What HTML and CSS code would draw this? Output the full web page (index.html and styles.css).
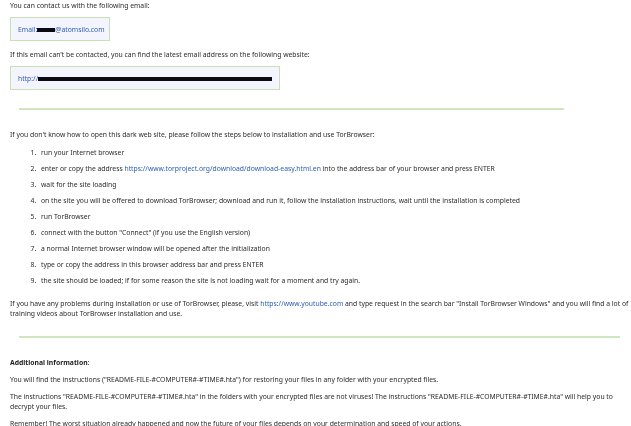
FILE: index.html
```html
<!DOCTYPE html>
<html lang="en">
<head>
<meta charset="utf-8">
<title>Contact</title>
<link rel="stylesheet" href="styles.css">
</head>
<body>
<main class="page">
  <p class="first">You can contact us with the following email:</p>
  <div class="box box-mail"><a class="nowrap">Email:<span class="redact redact-mail"></span>@atomsilo.com</a></div>
  <p class="after-box">If this email can't be contacted, you can find the latest email address on the following website:</p>
  <div class="box box-url"><a class="nowrap">http://<span class="redact redact-url"></span></a></div>
  <hr class="rule rule-one">
  <p class="intro">If you don't know how to open this dark web site, please follow the steps below to installation and use TorBrowser:</p>
  <ol class="steps">
    <li>run your Internet browser</li>
    <li>enter or copy the address <a>https://www.torproject.org/download/download-easy.html.en</a> into the address bar of your browser and press ENTER</li>
    <li>wait for the site loading</li>
    <li>on the site you will be offered to download TorBrowser; download and run it, follow the installation instructions, wait until the installation is completed</li>
    <li>run TorBrowser</li>
    <li>connect with the button "Connect" (if you use the English version)</li>
    <li>a normal Internet browser window will be opened after the initialization</li>
    <li>type or copy the address in this browser address bar and press ENTER</li>
    <li>the site should be loaded; if for some reason the site is not loading wait for a moment and try again.</li>
  </ol>
  <p class="help">If you have any problems during installation or use of TorBrowser, please, visit <a>https://www.youtube.com</a> and type request in the search bar "Install TorBrowser Windows" and you will find a lot of training videos about TorBrowser installation and use.</p>
  <hr class="rule rule-two">
  <p class="additional"><strong>Additional information</strong>:</p>
  <p class="para">You will find the instructions ("README-FILE-#COMPUTER#-#TIME#.hta") for restoring your files in any folder with your encrypted files.</p>
  <p class="para">The instructions "README-FILE-#COMPUTER#-#TIME#.hta" in the folders with your encrypted files are not viruses! The instructions "README-FILE-#COMPUTER#-#TIME#.hta" will help you to decrypt your files.</p>
  <p class="para">Remember! The worst situation already happened and now the future of your files depends on your determination and speed of your actions.</p>
</main>
</body>
</html>
```
FILE: styles.css
```css
html, body {
  margin: 0;
  padding: 0;
  background: #fff;
  overflow: hidden;
}
.page {
  width: 631px;
  height: 426px;
  overflow: hidden;
  box-sizing: border-box;
  padding: 1px 1px 0 10px;
  font-family: "Noto Sans", sans-serif;
  font-size: 6.8px;
  line-height: 10px;
  color: #2a2a2a;
  filter: blur(0.35px);
}
p { margin: 0; }
a { color: #2a5db0; }
.nowrap { white-space: nowrap; }
.box {
  box-sizing: border-box;
  height: 24px;
  margin-top: 6px;
  padding: 1px 0 0 7px;
  display: flex;
  align-items: center;
  background: #f3f4fd;
  border: 1.5px solid #c6e2b2;
}
.box-mail { width: 100px; }
.box-url { width: 270px; }
.redact {
  display: inline-block;
  height: 4px;
  background: #0a0a14;
  vertical-align: -0.5px;
}
.redact-mail { width: 18px; }
.redact-url { width: 234px; }
.after-box { margin-top: 9px; }
.rule {
  height: 2px;
  margin: 18px 0 0 9px;
  border: 0;
  background: #cfe6bf;
}
.rule-one { width: 545px; }
.rule-two { width: 601px; margin-top: 17px; }
.intro { margin-top: 20px; }
.steps {
  margin: 8px 0 0;
  padding: 0 0 0 28px;
}
.steps li { margin-bottom: 6px; padding-left: 3px; }
.help { margin-top: 13px; }
.additional { margin-top: 20px; }
.additional strong { color: #1c1c1c; }
.para { margin-top: 7px; }
```
